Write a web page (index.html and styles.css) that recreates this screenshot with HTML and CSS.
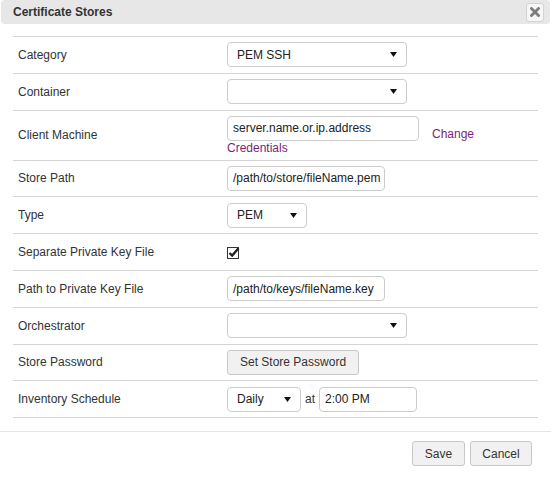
FILE: index.html
```html
<!DOCTYPE html>
<html>
<head>
<meta charset="utf-8">
<link rel="stylesheet" href="styles.css">
</head>
<body>
<div class="dialog">
  <div class="titlebar">
    <span class="title">Certificate Stores</span>
    <button class="close" type="button" aria-label="close">
      <svg width="10" height="10" viewBox="0 0 10 10"><path d="M1.5 1.5 L8.5 8.5 M8.5 1.5 L1.5 8.5" stroke="#7d7d7d" stroke-width="2.8" stroke-linecap="square"/></svg>
    </button>
  </div>
  <div class="body">
    <table class="form">
      <tr>
        <td class="label">Category</td>
        <td><div class="select w180"><span>PEM SSH</span><svg class="arrow" width="7" height="5" viewBox="0 0 7 5"><path d="M0 0 H7 L3.5 5 Z" fill="#111"/></svg></div></td>
      </tr>
      <tr>
        <td class="label">Container</td>
        <td><div class="select w180"><span></span><svg class="arrow" width="7" height="5" viewBox="0 0 7 5"><path d="M0 0 H7 L3.5 5 Z" fill="#111"/></svg></div></td>
      </tr>
      <tr>
        <td class="label">Client Machine</td>
        <td class="machine">
          <div class="machine-line"><span class="input w192">server.name.or.ip.address</span><a class="link change">Change</a></div>
          <a class="link">Credentials</a>
        </td>
      </tr>
      <tr>
        <td class="label">Store Path</td>
        <td><span class="input w158">/path/to/store/fileName.pem</span></td>
      </tr>
      <tr>
        <td class="label">Type</td>
        <td><div class="select w80"><span>PEM</span><svg class="arrow" width="7" height="5" viewBox="0 0 7 5"><path d="M0 0 H7 L3.5 5 Z" fill="#111"/></svg></div></td>
      </tr>
      <tr>
        <td class="label">Separate Private Key File</td>
        <td class="check-cell"><svg class="check" width="14" height="14" viewBox="0 0 14 14"><rect x="0.5" y="1.5" width="11" height="11" fill="#fff" stroke="#333"/><path d="M2.5 7 L5.2 9.6 L11.5 2.2" fill="none" stroke="#222" stroke-width="2.4"/></svg></td>
      </tr>
      <tr>
        <td class="label">Path to Private Key File</td>
        <td><span class="input w158">/path/to/keys/fileName.key</span></td>
      </tr>
      <tr>
        <td class="label">Orchestrator</td>
        <td><div class="select w180"><span></span><svg class="arrow" width="7" height="5" viewBox="0 0 7 5"><path d="M0 0 H7 L3.5 5 Z" fill="#111"/></svg></div></td>
      </tr>
      <tr>
        <td class="label">Store Password</td>
        <td><button class="btn" type="button">Set Store Password</button></td>
      </tr>
      <tr>
        <td class="label">Inventory Schedule</td>
        <td><div class="schedule"><div class="select w74"><span>Daily</span><svg class="arrow" width="7" height="5" viewBox="0 0 7 5"><path d="M0 0 H7 L3.5 5 Z" fill="#111"/></svg></div><span class="at">at</span><span class="input w98">2:00 PM</span></div></td>
      </tr>
    </table>
  </div>
  <div class="footer">
    <button class="btn save" type="button">Save</button>
    <button class="btn cancel" type="button">Cancel</button>
  </div>
</div>
</body>
</html>
```
FILE: styles.css
```css
html, body {
  margin: 0;
  padding: 0;
  background: #fff;
}
body {
  font-family: "Liberation Sans", Arial, sans-serif;
  font-size: 12px;
  color: #333;
}
.dialog {
  width: 551px;
}
.titlebar {
  display: flex;
  align-items: center;
  justify-content: space-between;
  height: 24px;
  margin: 0 1px;
  padding: 0 6px 0 12px;
  background: #e7e7e7;
  border-radius: 4px;
  box-sizing: border-box;
}
.title {
  font-weight: bold;
  color: #333;
}
.close {
  width: 18px;
  height: 19px;
  padding: 0;
  margin: 0;
  display: flex;
  align-items: center;
  justify-content: center;
  background: #f6f6f6;
  border: 1px solid #d3d3d3;
  border-radius: 3px;
  box-sizing: border-box;
}
.body {
  padding: 12px 13px 0;
}
.form {
  width: 525px;
  border-collapse: collapse;
  border-bottom: 1px solid #d4d4d4;
}
.form tr {
  height: 36.8px;
}
.form td {
  border-top: 1px solid #d4d4d4;
  padding: 4px 5px;
  line-height: 14px;
  vertical-align: middle;
}
.form td.label {
  width: 199px;
}
.select, .input {
  display: inline-flex;
  align-items: center;
  height: 25px;
  box-sizing: border-box;
  border: 1px solid #ccc;
  border-radius: 4px;
  background: #fff;
  color: #222;
  vertical-align: middle;
}
.select {
  justify-content: space-between;
  padding: 0 9px 0 9px;
}
.input {
  padding: 0 5px;
  white-space: nowrap;
  overflow: hidden;
}
.w180 { width: 180px; }
.w80 { width: 80px; }
.w74 { width: 74px; }
.w192 { width: 192px; }
.w158 { width: 158px; }
.w98 { width: 98px; }
.arrow {
  display: block;
}
.form td.machine {
  padding: 5px 5px 5px;
}
.machine-line {
  display: flex;
  align-items: center;
}
.link {
  color: #7a1f78;
  display: block;
}
.change {
  margin: 11px 0 0 13px;
}
.check {
  display: block;
  margin-top: 1px;
}
.schedule {
  display: flex;
  align-items: center;
}
.at {
  margin: 0 4px;
}
.btn {
  height: 25px;
  padding: 0 12px;
  font-family: "Liberation Sans", Arial, sans-serif;
  font-size: 12px;
  color: #333;
  background: #f1f1f1;
  border: 1px solid #c8c8c8;
  border-radius: 3px;
  box-sizing: border-box;
}
.footer {
  margin-top: 13px;
  border-top: 1px solid #e5e5e5;
  padding: 9px 19px 0 0;
  display: flex;
  justify-content: flex-end;
  gap: 5px;
}
.save { width: 53px; padding: 0; }
.cancel { width: 62px; padding: 0; }
```
